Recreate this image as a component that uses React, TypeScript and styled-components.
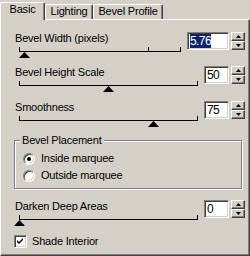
import React from "react";
import styled, { createGlobalStyle } from "styled-components";

const GlobalStyle = createGlobalStyle`
  html, body { margin: 0; padding: 0; background: #d4d0c8; }
  body { font-family: "Liberation Sans", Arial, sans-serif; font-size: 11px; }
`;

const Dialog = styled.div`
  width: 250px;
  height: 256px;
  display: flex;
  flex-direction: column;
  background: #d4d0c8;
  color: #000;
  letter-spacing: -0.2px;
  overflow: hidden;
`;

const TabStrip = styled.div`
  flex: none;
  display: flex;
  align-items: flex-end;
  height: 19px;
`;

const Tab = styled.div<{ $active?: boolean; $w: number }>`
  position: relative;
  z-index: 1;
  box-sizing: border-box;
  width: ${(p) => p.$w}px;
  height: ${(p) => (p.$active ? 18 : 15)}px;
  margin-bottom: ${(p) => (p.$active ? -1 : 0)}px;
  background: #d4d0c8;
  border-style: solid;
  border-width: 1px 1px 0 1px;
  border-color: #fff #404040 transparent #fff;
  box-shadow: inset -1px 0 #808080;
  border-radius: 2px 2px 0 0;
  display: flex;
  justify-content: center;
  line-height: 13px;
  padding-top: ${(p) => (p.$active ? 0 : 0)}px;
`;

const Panel = styled.div`
  flex: 1;
  box-sizing: border-box;
  border: 1px solid;
  border-color: #fff #404040 #404040 #fff;
  box-shadow: inset -1px -1px #808080;
  padding: 12px 4px 0 14px;
  display: flex;
  flex-direction: column;
`;

const SliderRow = styled.div<{ $mt: number }>`
  display: grid;
  grid-template-columns: 1fr auto auto;
  grid-template-rows: 13px 12px;
  column-gap: 1px;
  margin-top: ${(p) => p.$mt}px;
`;

const Label = styled.div`
  grid-column: 1;
  grid-row: 1;
  line-height: 13px;
  white-space: nowrap;
`;

const Track = styled.div`
  grid-column: 1;
  grid-row: 2;
  position: relative;
  margin: 0 5px 0 4px;
  height: 12px;
`;

const TrackLine = styled.div`
  margin-top: 6px;
  height: 1px;
  background: #000;
`;

const Tick = styled.div`
  position: absolute;
  top: 2px;
  width: 1px;
  height: 4px;
  background: #000;
`;

const Thumb = styled.svg`
  position: absolute;
  top: 7px;
  width: 11px;
  height: 6px;
  display: block;
`;

const Edit = styled.div<{ $w: number }>`
  grid-column: 2;
  grid-row: 1 / span 2;
  align-self: start;
  box-sizing: border-box;
  width: ${(p) => p.$w}px;
  height: 18px;
  margin-right: 1px;
  background: #fff;
  border: 1px solid;
  border-color: #808080 #fff #fff #808080;
  box-shadow: inset 1px 1px #404040, inset -1px -1px #d4d0c8;
  padding: 1px 0 0 2px;
  font-size: 12px;
  line-height: 14px;
  letter-spacing: -0.6px;
  white-space: nowrap;
  overflow: hidden;
`;

const Selected = styled.span`
  background: #0a246a;
  color: #fff;
`;

const Spin = styled.div`
  grid-column: 3;
  grid-row: 1 / span 2;
  align-self: start;
  display: grid;
  grid-template-rows: 9px 9px;
  width: 14px;
`;

const SpinButton = styled.div`
  box-sizing: border-box;
  border: 1px solid;
  border-color: #fff #404040 #404040 #fff;
  box-shadow: inset -1px -1px #808080;
  background: #d4d0c8;
  display: flex;
  align-items: center;
  justify-content: center;
`;

const Group = styled.fieldset`
  box-sizing: border-box;
  width: 228px;
  margin: 8px 0 0 -1px;
  padding: 0;
  border: 1px solid #808080;
  box-shadow: inset 1px 1px #fff, 1px 1px #fff;
`;

const Legend = styled.legend`
  margin-left: 5px;
  padding: 0 2px;
  line-height: 13px;
  background: #d4d0c8;
`;

const Options = styled.div`
  padding: 3px 0 4px 8px;
  display: flex;
  flex-direction: column;
`;

const OptionRow = styled.div`
  display: flex;
  align-items: center;
  gap: 6px;
  height: 17px;
  line-height: 13px;
`;

const Radio = styled.span`
  box-sizing: border-box;
  width: 12px;
  height: 12px;
  border-radius: 50%;
  background: #fff;
  border: 1px solid;
  border-color: #808080 #fff #fff #808080;
  box-shadow: inset 1px 1px #404040, inset -1px -1px #d4d0c8;
  display: flex;
  align-items: center;
  justify-content: center;
`;

const RadioDot = styled.span`
  width: 4px;
  height: 4px;
  border-radius: 50%;
  background: #000;
`;

const CheckRow = styled.div`
  display: flex;
  align-items: center;
  gap: 5px;
  margin: 10px 0 0 -1px;
  height: 13px;
  line-height: 13px;
`;

const CheckBox = styled.span`
  box-sizing: border-box;
  width: 13px;
  height: 13px;
  background: #fff;
  border: 1px solid;
  border-color: #808080 #fff #fff #808080;
  box-shadow: inset 1px 1px #404040, inset -1px -1px #d4d0c8;
  display: flex;
  align-items: center;
  justify-content: center;
`;

const Arrow = ({ up }: { up?: boolean }) => (
  <svg width="5" height="3" viewBox="0 0 5 3" style={{ display: "block" }}>
    <polygon points={up ? "2.5,0 5,3 0,3" : "0,0 5,0 2.5,3"} fill="#000" />
  </svg>
);

const pos = (pct: number, half = 0) => `calc(${pct}% - ${pct / 100 + half}px)`;

type SliderProps = {
  label: string;
  value: string;
  pct: number;
  ticks: number[];
  editW: number;
  mt: number;
  selected?: boolean;
};

const Slider = ({ label, value, pct, ticks, editW, mt, selected }: SliderProps) => (
  <SliderRow $mt={mt}>
    <Label>{label}</Label>
    <Track>
      <TrackLine />
      {ticks.map((t) => (
        <Tick key={t} style={{ left: pos(t) }} />
      ))}
      <Thumb viewBox="0 0 11 6" style={{ left: pos(pct, 5) }}>
        <polygon points="5.5,0 11,6 0,6" fill="#000" />
      </Thumb>
    </Track>
    <Edit $w={editW}>{selected ? <Selected>{value}</Selected> : value}</Edit>
    <Spin>
      <SpinButton>
        <Arrow up />
      </SpinButton>
      <SpinButton>
        <Arrow />
      </SpinButton>
    </Spin>
  </SliderRow>
);

export default function App() {
  return (
    <>
      <GlobalStyle />
      <Dialog>
        <TabStrip>
          <Tab $active $w={45}>Basic</Tab>
          <Tab $w={48}>Lighting</Tab>
          <Tab $w={70}>Bevel Profile</Tab>
        </TabStrip>
        <Panel>
          <Slider label="Bevel Width (pixels)" value="5.76" pct={3.1} ticks={[0, 80, 100]} editW={42} mt={0} selected />
          <Slider label="Bevel Height Scale" value="50" pct={50} ticks={[0, 100]} editW={25} mt={9} />
          <Slider label="Smoothness" value="75" pct={75} ticks={[0, 100]} editW={25} mt={10} />
          <Group>
            <Legend>Bevel Placement</Legend>
            <Options>
              <OptionRow>
                <Radio>
                  <RadioDot />
                </Radio>
                Inside marquee
              </OptionRow>
              <OptionRow>
                <Radio />
                Outside marquee
              </OptionRow>
            </Options>
          </Group>
          <Slider label="Darken Deep Areas" value="0" pct={0} ticks={[0, 100]} editW={25} mt={11} />
          <CheckRow>
            <CheckBox>
              <svg width="7" height="7" viewBox="0 0 7 7" style={{ display: "block" }}>
                <path d="M0 2 L2 4 L6 0 L6 2 L2 6 L0 4 Z" fill="#000" />
              </svg>
            </CheckBox>
            Shade Interior
          </CheckRow>
        </Panel>
      </Dialog>
    </>
  );
}
